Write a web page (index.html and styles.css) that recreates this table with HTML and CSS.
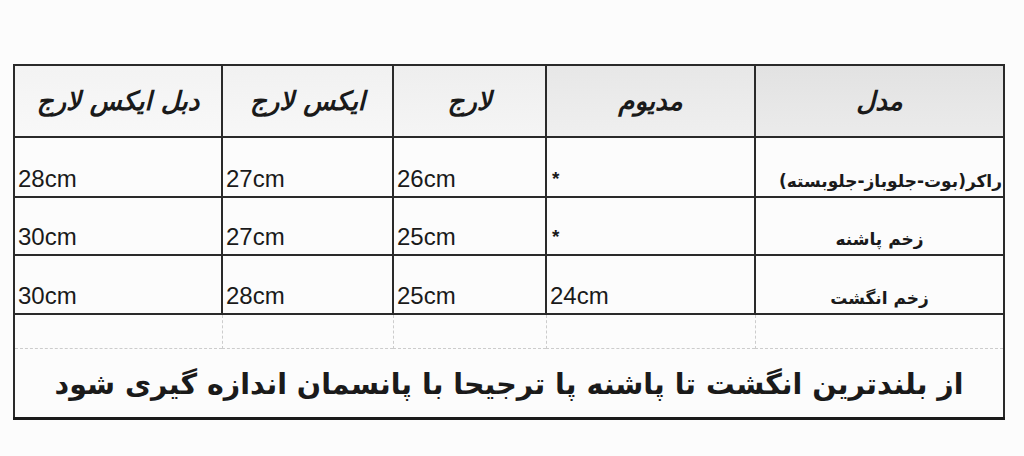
FILE: index.html
```html
<!DOCTYPE html>
<html lang="fa">
<head>
<meta charset="utf-8">
<title>جدول سایز</title>
<link rel="stylesheet" href="styles.css">
</head>
<body>
<div class="sheet">
  <table class="size-table" dir="rtl">
    <colgroup>
      <col class="c-model">
      <col class="c-m">
      <col class="c-l">
      <col class="c-xl">
      <col class="c-xxl">
    </colgroup>
    <thead>
      <tr class="head-row">
        <th class="h-model">مدل</th>
        <th class="h-m">مدیوم</th>
        <th class="h-l">لارج</th>
        <th class="h-xl">ایکس لارج</th>
        <th class="h-xxl">دبل ایکس لارج</th>
      </tr>
    </thead>
    <tbody>
      <tr class="row r1">
        <td class="model model-wide">راکر(بوت-جلوباز-جلوبسته)</td>
        <td class="val star">*</td>
        <td class="val">26cm</td>
        <td class="val">27cm</td>
        <td class="val">28cm</td>
      </tr>
      <tr class="row r2">
        <td class="model">زخم پاشنه</td>
        <td class="val star">*</td>
        <td class="val">25cm</td>
        <td class="val">27cm</td>
        <td class="val">30cm</td>
      </tr>
      <tr class="row r3">
        <td class="model">زخم انگشت</td>
        <td class="val">24cm</td>
        <td class="val">25cm</td>
        <td class="val">28cm</td>
        <td class="val">30cm</td>
      </tr>
      <tr class="empty-row">
        <td></td><td></td><td></td><td></td><td></td>
      </tr>
      <tr class="note-row">
        <td colspan="5">از بلندترین انگشت تا پاشنه پا ترجیحا با پانسمان اندازه گیری شود</td>
      </tr>
    </tbody>
  </table>
</div>
</body>
</html>
```
FILE: styles.css
```css
html, body {
  margin: 0;
  padding: 0;
  background: #fcfcfc;
}
body {
  width: 1024px;
  height: 456px;
  overflow: hidden;
  font-family: "DejaVu Sans", sans-serif;
  color: #1a1a1a;
}
.sheet {
  padding: 64px 0 0 13px;
}
.size-table {
  width: 990px;
  border-collapse: collapse;
  table-layout: fixed;
}
.c-model { width: 249px; }
.c-m { width: 209px; }
.c-l { width: 153px; }
.c-xl { width: 171px; }
.c-xxl { width: 208px; }

.size-table th,
.size-table td {
  box-sizing: border-box;
  border: 2px solid #2a2a2a;
  padding: 0;
  overflow: hidden;
}
.head-row th {
  height: 72px;
  font-size: 26px;
  font-weight: bold;
  font-style: italic;
  vertical-align: middle;
  text-align: center;
  line-height: 1;
}
.h-xxl { background: linear-gradient(180deg, #f3f3f3, #f8f8f8); }
.h-xl  { background: linear-gradient(180deg, #f1f1f1, #f7f7f7); }
.h-l   { background: linear-gradient(180deg, #eeeeee, #f5f5f5); }
.h-m   { background: linear-gradient(180deg, #e7e7e7, #efefef); }
.h-model { background: linear-gradient(180deg, #e2e2e2, #ebebeb); }

.row td {
  vertical-align: bottom;
  line-height: 1;
}
.r1 td { height: 60px; }
.r2 td { height: 58px; }
.r3 td { height: 59px; }
.val {
  direction: ltr;
  text-align: left;
  font-family: "Liberation Sans", Arial, sans-serif;
  font-size: 24px;
  padding: 0 0 5px 3px !important;
}
.val.star {
  font-size: 19px;
  font-weight: bold;
  padding-bottom: 8px !important;
  padding-left: 5px !important;
}
.model {
  text-align: center;
  font-size: 17px;
  font-weight: bold;
  padding-bottom: 6px !important;
  white-space: nowrap;
}
.model-wide {
  text-align: right;
  padding-right: 1px !important;
}
.empty-row td {
  height: 34px;
  border-top: 2px solid #2a2a2a;
  border-bottom: 1px dashed #cccccc;
  border-left: 1px dashed #cccccc;
  border-right: 1px dashed #cccccc;
}
.empty-row td:first-child { border-right: 2px solid #2a2a2a; }
.empty-row td:last-child { border-left: 2px solid #2a2a2a; }
.note-row td {
  height: 70px;
  border-top: 1px dashed #cccccc;
  border-bottom: 3px solid #1a1a1a;
  font-size: 28.5px;
  font-weight: bold;
  text-align: center;
  vertical-align: middle;
  line-height: 1;
  padding-top: 6px;
}
```
